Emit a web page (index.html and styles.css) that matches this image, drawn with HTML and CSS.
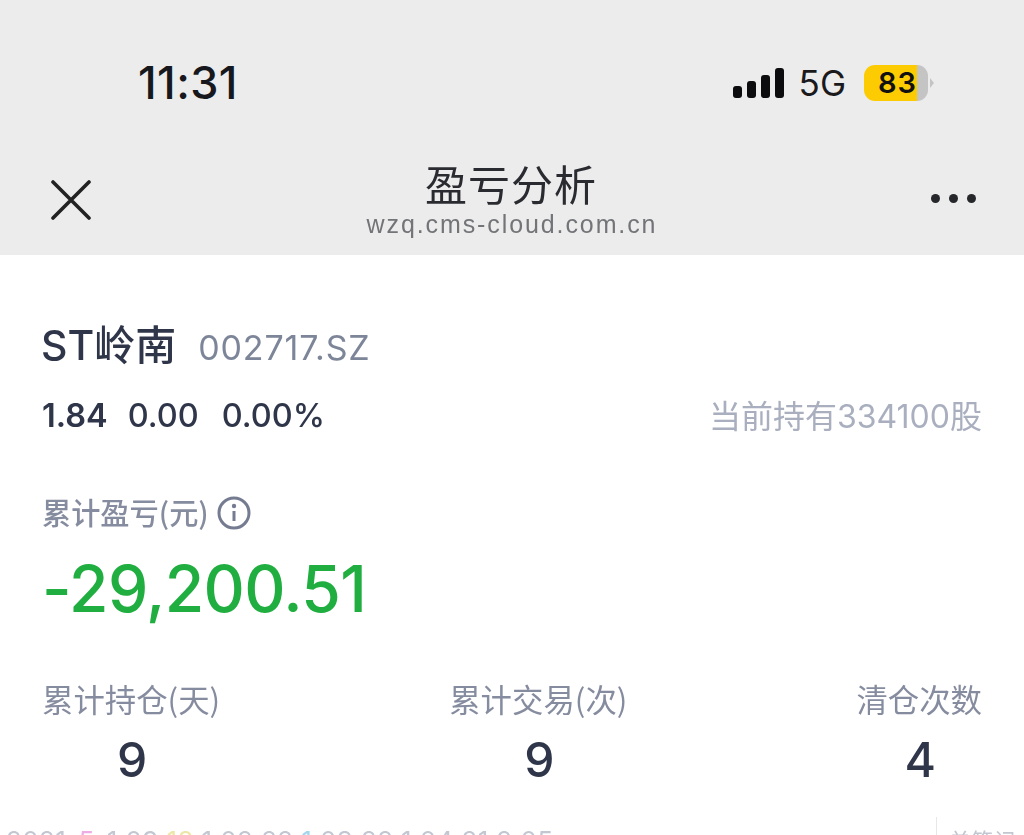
FILE: index.html
```html
<!DOCTYPE html>
<html lang="zh-CN">
<head>
<meta charset="utf-8">
<title>盈亏分析</title>
<link rel="stylesheet" href="styles.css">
</head>
<body>
<div class="page">
  <header class="top">
    <div class="status">
      <span class="time">11:31</span>
      <div class="status-right">
        <svg class="signal" width="51" height="32" viewBox="0 0 51 32" aria-hidden="true">
          <rect x="0" y="19" width="9" height="12" rx="3"/>
          <rect x="14" y="14" width="9" height="17" rx="3"/>
          <rect x="28" y="8" width="9" height="23" rx="3"/>
          <rect x="42" y="1" width="9" height="30" rx="3"/>
        </svg>
        <span class="net">5G</span>
        <div class="battery"><span class="level">83</span><span class="rest"></span></div>
        <span class="nub"></span>
      </div>
    </div>
    <nav class="nav">
      <svg class="close" width="40" height="40" viewBox="0 0 40 40" aria-hidden="true">
        <path d="M2 2 L38 38 M38 2 L2 38"/>
      </svg>
      <div class="titles">
        <div class="title">盈亏分析</div>
        <div class="url">wzq.cms-cloud.com.cn</div>
      </div>
      <div class="more"><i></i><i></i><i></i></div>
    </nav>
  </header>
  <main class="content">
    <div class="stock"><span class="name">ST岭南</span><span class="code">002717.SZ</span></div>
    <div class="quote">
      <div class="nums"><b>1.84</b><span>0.00</span><span>0.00%</span></div>
      <div class="hold">当前持有334100股</div>
    </div>
    <div class="pl-label">累计盈亏(元)
      <svg class="info" width="34" height="34" viewBox="0 0 34 34" aria-hidden="true">
        <circle cx="17" cy="17" r="15"/>
        <path d="M17 15 V25"/>
        <circle class="dot" cx="17" cy="10" r="2.2"/>
      </svg>
    </div>
    <div class="pl-value">-29,200.51</div>
    <div class="stats">
      <div class="stat"><div class="k">累计持仓(天)</div><div class="v">9</div></div>
      <div class="stat"><div class="k">累计交易(次)</div><div class="v">9</div></div>
      <div class="stat"><div class="k">清仓次数</div><div class="v">4</div></div>
    </div>
  </main>
  <div class="peek">
    <span class="peek-text">2021-<span class="pink">5</span>-1 09:<span class="yellow">18</span> 1:02:22 <span class="blue">1</span>:03:22 1:04:21 2:05</span>
    <span class="peek-right">单笔记</span>
  </div>
</div>
</body>
</html>
```
FILE: styles.css
```css
* { box-sizing: border-box; }
html, body { margin: 0; padding: 0; background: #fff; }
body {
  font-family: "Inter", "Liberation Sans", "Noto Sans CJK SC", sans-serif;
  overflow: hidden;
}
.page { width: 1024px; height: 835px; overflow: hidden; display: flex; flex-direction: column; filter: blur(.6px); }

.top { background: #ececec; height: 255px; flex: none; }
.status {
  height: 150px;
  padding: 58px 90px 0 138px;
  display: flex;
  justify-content: space-between;
  align-items: flex-start;
}
.time { font-size: 45px; line-height: 50px; font-weight: 500; color: #16181d; letter-spacing: .4px; }
.status-right { display: flex; align-items: center; height: 50px; }
.signal { fill: #0c0c0e; margin-right: 15px; }
.net { font-size: 35px; color: #1a1a1c; line-height: 36px; margin-right: 18px; }
.battery { display: flex; width: 64px; height: 36px; border-radius: 11px; overflow: hidden; }
.level {
  width: 53px; background: #fdcb02; color: #111;
  font-size: 29px; font-weight: 600; line-height: 36px; text-align: right; letter-spacing: 1px;
}
.rest { flex: 1; background: #c4c4c4; }
.nub { width: 0; height: 0; border-left: 4px solid #c4c4c4; border-top: 5px solid transparent; border-bottom: 5px solid transparent; margin-left: 2px; }

.nav { display: flex; justify-content: space-between; padding: 0 48px 0 51px; height: 105px; position: relative; }
.close { margin-top: 30px; fill: none; stroke: #222; stroke-width: 3.6; stroke-linecap: round; }
.titles { position: absolute; left: 0; right: 0; top: 5px; text-align: center; margin-left: -2px; }
.title { font-size: 42px; line-height: 56px; color: #2a2b30; letter-spacing: 1px; font-family: "Noto Sans CJK SC", sans-serif; }
.url { font-family: "Liberation Sans", sans-serif; font-size: 25px; line-height: 30px; color: #737478; letter-spacing: 1.9px; margin-top: -2px; margin-left: 2px; }
.more { display: flex; gap: 9px; margin-top: 44px; height: 9px; }
.more i { width: 9px; height: 9px; border-radius: 50%; background: #26272b; }

.content { padding: 64px 42px 0 41px; flex: none; color: #2f3548; }
.stock { display: flex; align-items: baseline; height: 52px; }
.name { font-size: 41px; line-height: 52px; font-weight: 500; color: #30364a; }
.code { font-size: 34px; color: #7d8599; margin-left: 22px; letter-spacing: .85px; }
.quote { display: flex; justify-content: space-between; align-items: center; margin-top: 21px; height: 44px; }
.nums { display: flex; gap: 20px; font-size: 32.5px; font-weight: 500; color: #30364a; padding-left: 1px; padding-top: 2px; }
.nums b { font-weight: 600; }
.nums span:last-child { margin-left: 3px; }
.hold { font-size: 32px; color: #a9afbf; font-family: "Inter", "Noto Sans CJK SC", sans-serif; }

.pl-label { display: flex; align-items: center; gap: 8px; margin-top: 55px; height: 40px; font-size: 29.2px; font-weight: 500; color: #868c9f; font-family: "Noto Sans CJK SC", sans-serif; padding-left: 1px; }
.info { fill: none; stroke: #757b90; stroke-width: 3; margin-top: 3px; }
.info .dot { fill: #757b90; stroke: none; }
.pl-value { font-size: 64px; line-height: 80px; font-weight: 500; color: #1fae3f; margin-top: 18px; letter-spacing: -.6px; padding-left: 1px; }

.stats { display: flex; justify-content: space-between; margin-top: 50px; padding-left: 1px; }
.stat { text-align: center; }
.k { font-size: 31.4px; line-height: 40px; color: #868c9f; font-family: "Noto Sans CJK SC", sans-serif; }
.v { font-size: 48px; font-weight: 500; line-height: 58px; color: #30364a; margin-top: 12px; padding-left: 2px; }

.peek { display: flex; justify-content: space-between; margin-top: 37px; padding: 0 8px 0 6px; height: 30px; font-size: 26px; line-height: 30px; letter-spacing: .35px; color: #a9afbf; opacity: .7; flex: none; }
.pink { color: #e88ad8; }
.yellow { color: #e6dc80; }
.blue { color: #7cc4e8; }
.peek-right { border-left: 1px solid #ddd; padding-left: 12px; font-size: 22px; margin-top: -9px; padding-top: 9px; height: 39px; }
```
